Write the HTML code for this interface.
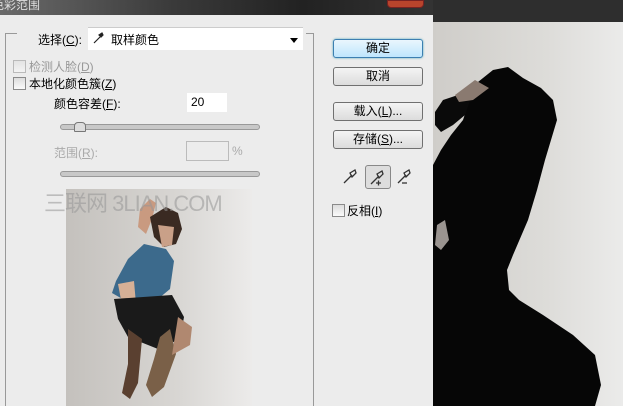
<!DOCTYPE html>
<html><head><meta charset="utf-8"><style>
body{margin:0;width:623px;height:406px;overflow:hidden;position:relative;background:#ececec;font-family:"Liberation Sans","Noto Sans CJK SC",sans-serif;font-size:12px;color:#000}
.a{position:absolute}
.btn{position:absolute;left:333px;width:88px;height:17px;border:1px solid #707070;border-radius:3px;background:linear-gradient(#f4f4f4,#dcdcdc);text-align:center;line-height:17px;font-size:12px}
.cb{position:absolute;width:11px;height:11px;border:1px solid #8a8a8a;background:linear-gradient(#ddd,#fafafa)}
.track{position:absolute;left:60px;width:198px;height:4px;border:1px solid #999;border-radius:3px;background:#c8c8c8}
</style></head><body>
<div class="a" style="left:0;top:0;width:433px;height:15px;background:linear-gradient(90deg,#6a6a6a,#3a3a3a 40%,#222 70%,#333);"></div>
<div class="a" style="left:-8px;top:-4px;color:#ddd;font-size:12px">色彩范围</div>
<div class="a" style="left:387px;top:0;width:35px;height:6px;background:#b8442c;border-radius:0 0 4px 4px;border:1px solid #722"></div>
<div class="a" style="left:5px;top:33px;width:1px;height:373px;background:#999"></div>
<div class="a" style="left:5px;top:33px;width:12px;height:1px;background:#999"></div>
<div class="a" style="left:313px;top:33px;width:1px;height:373px;background:#999"></div>
<div class="a" style="left:306px;top:33px;width:8px;height:1px;background:#999"></div>
<div class="a" style="left:38px;top:31px">选择(<u>C</u>):</div>
<div class="a" style="left:88px;top:27px;width:215px;height:22px;background:#fff;border-top:1px solid #ccc"></div>
<svg class="a" style="left:92px;top:32px" width="12" height="12"><path d="M2,11 L8,5 M7,3 L10,1 L11,3 L9,5Z" stroke="#222" stroke-width="1.2" fill="#222"/></svg>
<div class="a" style="left:111px;top:31px">取样颜色</div>
<div class="a" style="left:290px;top:38px;border-left:4px solid transparent;border-right:4px solid transparent;border-top:5px solid #000"></div>
<div class="cb" style="left:13px;top:60px;opacity:.5"></div>
<div class="a" style="left:29px;top:58px;color:#999">检测人脸(<u>D</u>)</div>
<div class="cb" style="left:13px;top:77px"></div>
<div class="a" style="left:29px;top:75px">本地化颜色簇(<u>Z</u>)</div>
<div class="a" style="left:54px;top:95px">颜色容差(<u>F</u>):</div>
<div class="a" style="left:187px;top:93px;width:40px;height:19px;background:#fff;line-height:19px;text-indent:4px">20</div>
<div class="track" style="top:124px"></div>
<div class="a" style="left:74px;top:122px;width:10px;height:8px;background:#ddd;border:1px solid #777;border-radius:4px 4px 1px 1px"></div>
<div class="a" style="left:54px;top:144px;color:#aaa">范围(<u>R</u>):</div>
<div class="a" style="left:186px;top:141px;width:41px;height:18px;border:1px solid #bbb"></div>
<div class="a" style="left:232px;top:144px;color:#aaa">%</div>
<div class="track" style="top:171px"></div>
<div class="a" style="left:66px;top:189px;width:186px;height:217px;background:linear-gradient(90deg,#c4c1bd,#d8d6d3 60%,#ecebea);overflow:hidden">
<svg width="186" height="217" style="position:absolute;left:0;top:0">
<path d="M74,20 L84,10 L90,14 L86,30 L80,45 L72,38Z" fill="#c99a80"/>
<path d="M84,28 L100,18 L112,24 L116,40 L110,55 L98,58 L88,48Z" fill="#3a2a22"/>
<path d="M92,36 L108,38 L106,56 L96,58Z" fill="#c9a088"/>
<path d="M78,55 L100,60 L108,72 L104,100 L92,110 L60,112 L46,104 L50,92 L62,70Z" fill="#3c6a8c"/>
<path d="M52,95 L68,92 L70,115 L56,116Z" fill="#d6b096"/>
<path d="M48,110 L106,106 L118,128 L114,150 L92,160 L62,148 L52,130Z" fill="#1a1a1a"/>
<path d="M94,148 L104,140 L110,165 L98,198 L86,208 L80,196 L88,170Z" fill="#7a6048"/>
<path d="M62,140 L76,150 L72,194 L64,210 L56,204 L62,175Z" fill="#5a4030"/>
<path d="M112,128 L126,138 L124,156 L106,166Z" fill="#b08870"/>
</svg></div>
<div class="a" style="left:44px;top:186px;font-size:22px;color:rgba(150,150,150,.55);letter-spacing:-1px">三联网 3LIAN.COM</div>
<div class="btn" style="top:39px;border-color:#3c7fb1;background:linear-gradient(#eaf6fd,#bee6fd);box-shadow:0 0 2px #5ab">确定</div>
<div class="btn" style="top:67px">取消</div>
<div class="btn" style="top:102px">载入(<u>L</u>)...</div>
<div class="btn" style="top:130px">存储(<u>S</u>)...</div>
<div class="a" style="left:365px;top:165px;width:24px;height:22px;border:1px solid #888;border-radius:3px;background:#ddd"></div>
<svg class="a" style="left:340px;top:166px" width="80" height="22">
<g stroke="#333" stroke-width="1.3" fill="none"><path d="M4,17 L12,9 M10,7 L15,4 L16,7 L12,11Z"/><path d="M31,18 L39,10 M37,8 L42,5 L43,8 L39,12Z"/><path d="M36,17 h5 M38.5,14.5 v5"/><path d="M58,17 L66,9 M64,7 L69,4 L70,7 L66,11Z"/><path d="M62,17 h5"/></g></svg>
<div class="cb" style="left:332px;top:204px"></div>
<div class="a" style="left:347px;top:202px">反相(<u>I</u>)</div>
<div class="a" style="left:433px;top:0;width:190px;height:22px;background:#2e2e2e"></div>
<div class="a" style="left:433px;top:22px;width:190px;height:384px;background:linear-gradient(90deg,#cfcdc9,#dddcd9 60%,#ebebea)"></div>
<svg class="a" style="left:433px;top:0" width="190" height="406">
<path d="M0,165 L8,150 L18,135 L30,120 L35,105 L28,98 L45,82 L60,70 L75,67 L90,78 L108,88 L120,100 L124,120 L118,140 L112,160 L104,190 L95,220 L80,255 L74,270 L76,290 L86,300 L110,315 L140,335 L162,355 L168,385 L162,406 L0,406Z" fill="#060606"/>
<path d="M2,112 L10,100 L25,95 L38,98 L32,115 L20,125 L8,132 L2,125Z" fill="#0a0a0a"/>
<path d="M22,95 L42,80 L56,88 L40,100 L26,102Z" fill="#8a7a70"/>
<path d="M4,225 L12,220 L16,240 L8,250 L2,245Z" fill="#9a9490"/>
</svg>
</body></html>
